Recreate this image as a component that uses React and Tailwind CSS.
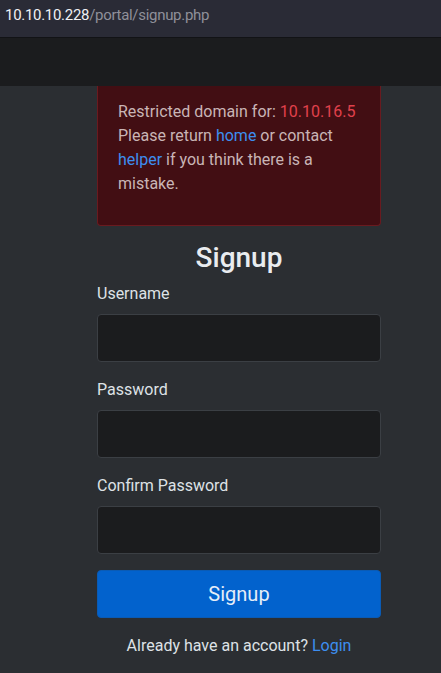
import React from 'react';

const Field = ({ label, type = 'text' }) => (
  <div className="flex flex-col">
    <label className="text-[16px] leading-6 text-[#dee2e6]">{label}</label>
    <input
      type={type}
      className="mt-[8px] h-[48px] w-full rounded-[4px] border border-[#3b3f44] bg-[#1b1c1e] px-3 text-[#dee2e6] outline-none"
    />
  </div>
);

export default function App() {
  return (
    <div className="flex min-h-[673px] flex-col bg-[#2b2e32] font-['Roboto',sans-serif]">
      {/* browser url bar */}
      <div className="flex h-[38px] items-center border-b border-[#121316] bg-[#2a2b36] pb-[7px] pl-[5px] font-['Roboto',sans-serif] text-[15px] tracking-[-0.3px]">
        <span className="text-[#f0f0f4]">10.10.10.228</span>
        <span className="text-[#8f909a]">/portal/signup.php</span>
      </div>
      <div className="h-[48px] bg-[#1b1c1e]" />

      <div className="ml-[97px] flex w-[284px] flex-col">
        <div className="rounded-b-[4px] border border-t-0 border-[#6a1a1f] bg-[#420e13] pb-[29px] pl-5 pr-4 pt-[14px] text-[16px] leading-6 text-[#c9b5b6]">
          Restricted domain for: <span className="text-[#e0414c]">10.10.16.5</span>
          <br />
          Please return <a className="text-[#3d8ef0]">home</a> or contact{' '}
          <a className="text-[#3d8ef0]">helper</a> if you think there is a mistake.
        </div>

        <h1 className="mt-[15px] text-center text-[28px] font-medium leading-[34px] text-[#e9ecef]">Signup</h1>

        <div className="mt-[7px] flex flex-col gap-[16px]">
          <Field label="Username" />
          <Field label="Password" type="password" />
          <Field label="Confirm Password" type="password" />
        </div>

        <button className="mt-[16px] h-[48px] w-full rounded-[4px] border border-[#0a5bb5] bg-[#0262cd] text-[20px] text-[#e6eef8]">
          Signup
        </button>

        <p className="mt-[16px] text-center text-[16px] leading-6 text-[#dee2e6]">
          Already have an account? <a className="text-[#3d8ef0]">Login</a>
        </p>
      </div>
    </div>
  );
}
